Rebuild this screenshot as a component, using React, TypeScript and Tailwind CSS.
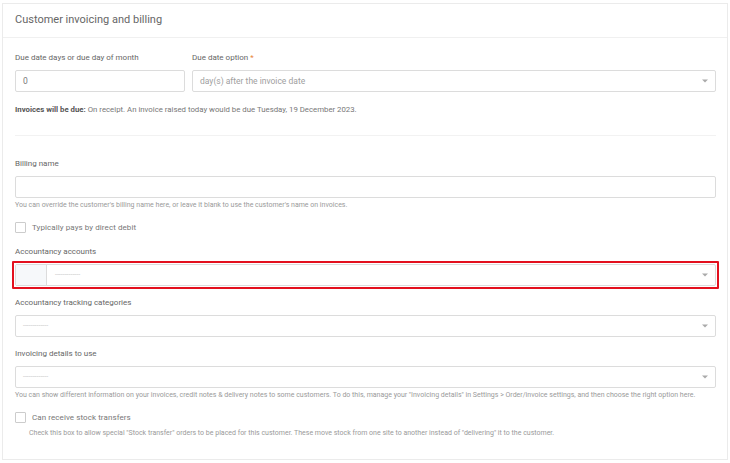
import { ReactNode } from "react";

const font = { fontFamily: "Roboto, 'Liberation Sans', sans-serif" };

function Label({ children }: { children: ReactNode }) {
  return (
    <div className="mb-[7px] text-[8px] leading-[11px] text-[#666]">
      {children}
    </div>
  );
}

function Help({ children }: { children: ReactNode }) {
  return (
    <div className="mt-[2px] text-[7px] leading-[10px] text-[#9a9a9a]">
      {children}
    </div>
  );
}

function Arrow() {
  return (
    <svg width="6" height="4" viewBox="0 0 6 4" className="shrink-0">
      <path d="M0 0.5h6L3 3.5z" fill="#aaa" />
    </svg>
  );
}

function Select({ addon }: { addon?: boolean }) {
  return (
    <div className="flex h-[22px] items-center rounded-[2px] border border-[#dcdcdc] bg-white">
      {addon && (
        <div className="h-full w-[31px] shrink-0 border-r border-[#dcdcdc] bg-[#f6f8fa]" />
      )}
      <span
        className={`flex-1 text-[7px] leading-none text-[#c8c8c8] ${addon ? "pl-[8px]" : "pl-[7px]"}`}
      >
        -------------
      </span>
      <div className="pr-[7px]">
        <Arrow />
      </div>
    </div>
  );
}

function Checkbox({ label }: { label: string }) {
  return (
    <div className="flex items-center gap-[6px]">
      <div className="h-[11px] w-[11px] rounded-[1px] border border-[#ccc] bg-white" />
      <span className="text-[8px] leading-none tracking-[0.01em] text-[#777]">{label}</span>
    </div>
  );
}

export default function App() {
  return (
    <div className="h-[463px] w-[730px] bg-white pl-[2px] pt-[3px]" style={font}>
      <div className="h-[457px] w-[726px] border border-[#ebebeb] bg-white">
        <div className="flex h-[34px] items-center border-b border-[#f0f0f0] px-[12px]">
          <h2 className="text-[11px] font-normal text-[#666]">
            Customer invoicing and billing
          </h2>
        </div>

        <div className="px-[12px] pr-[11px]">
          <div className="mt-[14px] flex gap-[7px]">
            <div className="w-[170px] shrink-0">
              <Label>Due date days or due day of month</Label>
              <div className="flex h-[22px] items-center rounded-[2px] border border-[#dcdcdc] px-[7px] text-[8.5px] text-[#777]">
                0
              </div>
            </div>
            <div className="flex-1">
              <Label>
                Due date option <span className="text-[#e8833a]">*</span>
              </Label>
              <div className="flex h-[22px] items-center justify-between rounded-[2px] border border-[#dcdcdc] pl-[7px] pr-[7px] text-[8.5px] text-[#a0a0a0]">
                <span>day(s) after the invoice date</span>
                <Arrow />
              </div>
            </div>
          </div>

          <div className="mt-[13px] text-[7.8px] leading-[10px] text-[#777]">
            <span className="font-bold text-[#555]">Invoices will be due:</span> On receipt. An
            invoice raised today would be due Tuesday, 19 December 2023.
          </div>

          <div className="mt-[20px] border-t border-[#f2f2f2]" />

          <div className="mt-[22px]">
            <Label>Billing name</Label>
            <div className="h-[22px] rounded-[2px] border border-[#dcdcdc]" />
            <Help>
              You can override the customer's billing name here, or leave it blank to use the
              customer's name on invoices.
            </Help>
          </div>

          <div className="mt-[12px]">
            <Checkbox label="Typically pays by direct debit" />
          </div>

          <div className="mt-[13px]">
            <Label>Accountancy accounts</Label>
            <div className="-mx-[3px] -mt-[3px] rounded-[1px] border-2 border-[#e3101e] p-[1px]">
              <Select addon />
            </div>
          </div>

          <div className="mt-[8px]">
            <Label>Accountancy tracking categories</Label>
            <Select />
          </div>

          <div className="mt-[11px]">
            <Label>Invoicing details to use</Label>
            <Select />
            <Help>
              You can show different information on your invoices, credit notes &amp; delivery
              notes to some customers. To do this, manage your "Invoicing details" in Settings &gt;
              Order/invoice settings, and then choose the right option here.
            </Help>
          </div>

          <div className="mt-[12px]">
            <Checkbox label="Can receive stock transfers" />
            <div className="mt-[5px] pl-[14px] text-[7px] leading-[10px] text-[#9a9a9a]">
              Check this box to allow special "Stock transfer" orders to be placed for this
              customer. These move stock from one site to another instead of "delivering" it to
              the customer.
            </div>
          </div>
        </div>
      </div>
    </div>
  );
}
